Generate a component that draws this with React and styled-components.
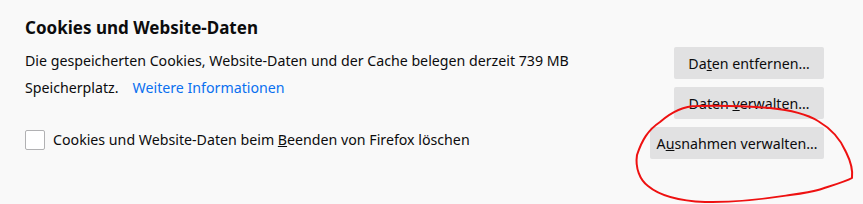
import React from "react";
import styled, { createGlobalStyle } from "styled-components";

const GlobalStyle = createGlobalStyle`
  html, body {
    margin: 0;
    padding: 0;
    background: #f9f9f9;
  }
  body {
    font-family: "Noto Sans", "Open Sans", sans-serif;
    color: #0c0c0d;
  }
`;

const Page = styled.section`
  position: relative;
  width: 863px;
  height: 204px;
  box-sizing: border-box;
  padding: 14px 39px 0 25px;
  overflow: hidden;
`;

const Heading = styled.h2`
  margin: 0;
  font-size: 17px;
  font-weight: 700;
  line-height: 28px;
`;

const Body = styled.div`
  display: flex;
  justify-content: space-between;
  margin-top: 5px;
`;

const LeftColumn = styled.div`
  display: flex;
  flex-direction: column;
`;

const Description = styled.div`
  font-size: 14.2px;
  line-height: 27px;
  width: 560px;
`;

const SecondLine = styled.div`
  display: flex;
  gap: 14px;
`;

const Link = styled.a`
  color: #0a70f0;
  text-decoration: none;
`;

const CheckRow = styled.label`
  display: flex;
  align-items: center;
  gap: 8px;
  margin-top: 29px;
  font-size: 14.2px;
  line-height: 20px;
`;

const CheckBox = styled.span`
  flex: none;
  width: 20px;
  height: 20px;
  box-sizing: border-box;
  border: 1px solid #b1b1b3;
  border-radius: 2px;
  background: #ffffff;
`;

const ButtonStack = styled.div`
  display: flex;
  flex-direction: column;
  align-items: flex-end;
  gap: 8px;
`;

const Button = styled.button`
  width: ${(p) => p.width}px;
  height: 32px;
  box-sizing: border-box;
  border: none;
  border-radius: 2px;
  background: #e1e1e2;
  color: #0c0c0d;
  font-family: inherit;
  font-size: 14.2px;
  white-space: nowrap;
  padding: 0;
  cursor: pointer;
`;

const Annotation = styled.svg`
  position: absolute;
  left: 0;
  top: 0;
  pointer-events: none;
`;

export default function App() {
  return (
    <>
      <GlobalStyle />
      <Page>
        <Heading>Cookies und Website-Daten</Heading>
        <Body>
          <LeftColumn>
            <Description>
              <div>Die gespeicherten Cookies, Website-Daten und der Cache belegen derzeit 739 MB</div>
              <SecondLine>
                <span>Speicherplatz.</span>
                <Link href="#">Weitere Informationen</Link>
              </SecondLine>
            </Description>
            <CheckRow>
              <CheckBox />
              <span>
                Cookies und Website-Daten beim <u>B</u>eenden von Firefox löschen
              </span>
            </CheckRow>
          </LeftColumn>
          <ButtonStack>
            <Button width={150}>
              Da<u>t</u>en entfernen…
            </Button>
            <Button width={150}>
              Daten <u>v</u>erwalten…
            </Button>
            <Button width={174}>
              A<u>u</u>snahmen verwalten…
            </Button>
          </ButtonStack>
        </Body>
        <Annotation width="863" height="204" viewBox="0 0 863 204">
          <path
            d="M697 106 C680 106 668 115 660 122 C648 130 642 140 637 155 C635 168 640 180 648 186 C660 196 680 201 705 202 C740 203 770 198 790 195 C805 193 812 192 818 190 C830 186 845 182 852 178 C853 170 850 160 846 152 C840 138 830 128 818 121 C805 113 790 110 770 108 C745 106 725 105 697 106 Z"
            fill="none"
            stroke="#ee1111"
            strokeWidth="2"
            strokeLinejoin="round"
          />
        </Annotation>
      </Page>
    </>
  );
}
